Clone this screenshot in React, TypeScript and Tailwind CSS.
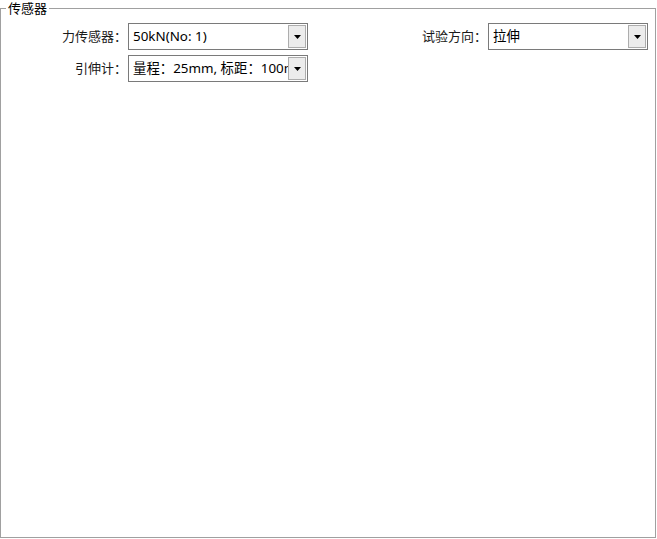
import React from 'react';

const font = { fontFamily: '"Noto Sans", "Noto Sans CJK SC", sans-serif' };

// Windows-style combo box
const Combo = ({ value, width }: { value: string; width: string }) => (
  <div className={`${width} h-[27px] flex items-stretch border border-[#7a7a7a] bg-white`}>
    <div className="flex-1 min-w-0 overflow-hidden whitespace-nowrap pl-[4px] flex items-center text-[13.4px] text-black leading-none">
      {value}
    </div>
    <div className="w-[18px] my-[1px] mr-[1px] border border-[#adadad] bg-[#ececec] flex items-center justify-center">
      <svg width="7" height="4" viewBox="0 0 7 4">
        <path d="M0 0h7L3.5 4z" fill="#000" />
      </svg>
    </div>
  </div>
);

export default function App() {
  return (
    <div className="w-[657px] h-[539px] bg-white pt-[8px] text-[13px] text-[#1a1a1a]" style={font}>
      <div className="relative w-[656px] h-[530px] border border-[#a0a0a0]">
        <span className="absolute left-[5px] -top-[9px] bg-white px-[2px] leading-[16px] text-black">传感器</span>
        <div className="flex flex-col gap-[5px] pt-[14px]">
          <div className="flex items-center justify-between pr-[7px]">
            <div className="flex items-center">
              <div className="w-[127px] pr-[1px] text-right">力传感器：</div>
              <Combo value="50kN(No: 1)" width="w-[180px]" />
            </div>
            <div className="flex items-center">
              <div className="pr-[1px]">试验方向：</div>
              <Combo value="拉伸" width="w-[160px]" />
            </div>
          </div>
          <div className="flex items-center">
            <div className="w-[127px] pr-[1px] text-right">引伸计：</div>
            <Combo value="量程：25mm, 标距：100mm" width="w-[180px]" />
          </div>
        </div>
      </div>
    </div>
  );
}
